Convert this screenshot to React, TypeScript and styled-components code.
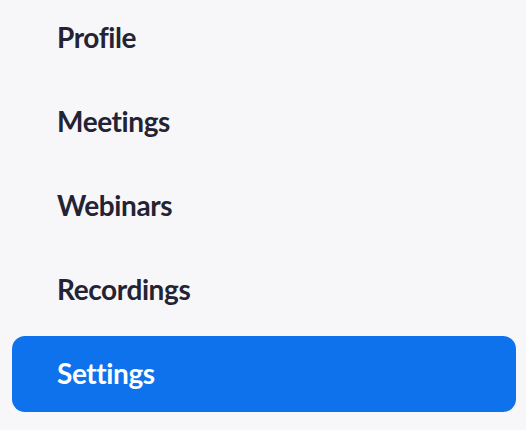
import React from 'react';
import styled, { createGlobalStyle } from 'styled-components';

const GlobalStyle = createGlobalStyle`
  html, body {
    margin: 0;
    padding: 0;
    background: #f7f7fa;
  }
  body {
    font-family: Lato, "Open Sans", sans-serif;
  }
`;

const Nav = styled.nav`
  display: flex;
  flex-direction: column;
  gap: 8px;
  padding: 0 10px 18px 12px;
`;

const NavItem = styled.a<{ active?: boolean }>`
  display: flex;
  align-items: center;
  height: 76px;
  box-sizing: border-box;
  padding: 0 0 3px 45px;
  border-radius: 13px;
  font-size: 28px;
  font-weight: 700;
  letter-spacing: -0.4px;
  text-decoration: none;
  color: ${({ active }) => (active ? '#ffffff' : '#232333')};
  background: ${({ active }) => (active ? '#0e72ed' : 'transparent')};
  cursor: pointer;
`;

const items = ['Profile', 'Meetings', 'Webinars', 'Recordings', 'Settings'];

export default function App() {
  return (
    <>
      <GlobalStyle />
      <Nav>
        {items.map(label => (
          <NavItem key={label} active={label === 'Settings'}>
            {label}
          </NavItem>
        ))}
      </Nav>
    </>
  );
}
